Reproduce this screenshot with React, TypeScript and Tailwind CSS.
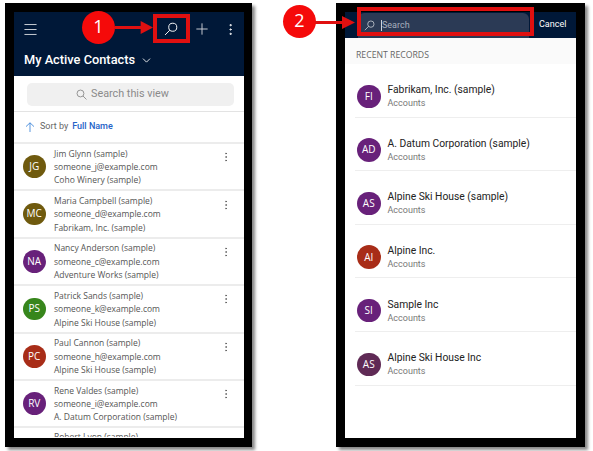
import { ChevronDown, Menu, MoreVertical, Plus } from "lucide-react";

const CONTACTS = [
  { initials: "JG", color: "bg-[#6f5a0e]", name: "Jim Glynn (sample)", email: "someone_j@example.com", company: "Coho Winery (sample)" },
  { initials: "MC", color: "bg-[#6f5a0e]", name: "Maria Campbell (sample)", email: "someone_d@example.com", company: "Fabrikam, Inc. (sample)" },
  { initials: "NA", color: "bg-[#68217a]", name: "Nancy Anderson (sample)", email: "someone_c@example.com", company: "Adventure Works (sample)" },
  { initials: "PS", color: "bg-[#37861c]", name: "Patrick Sands (sample)", email: "someone_k@example.com", company: "Alpine Ski House (sample)" },
  { initials: "PC", color: "bg-[#a82d18]", name: "Paul Cannon (sample)", email: "someone_h@example.com", company: "Alpine Ski House (sample)" },
  { initials: "RV", color: "bg-[#68217a]", name: "Rene Valdes (sample)", email: "someone_i@example.com", company: "A. Datum Corporation (sample)" },
];

const RECORDS = [
  { initials: "FI", color: "bg-[#68217a]", name: "Fabrikam, Inc. (sample)" },
  { initials: "AD", color: "bg-[#68217a]", name: "A. Datum Corporation (sample)" },
  { initials: "AS", color: "bg-[#68217a]", name: "Alpine Ski House (sample)" },
  { initials: "AI", color: "bg-[#a82d18]", name: "Alpine Inc." },
  { initials: "SI", color: "bg-[#68217a]", name: "Sample Inc" },
  { initials: "AS", color: "bg-[#5f2a55]", name: "Alpine Ski House Inc" },
];

function SearchGlyph({ className }: { className: string }) {
  return (
    <svg className={className} viewBox="0 0 16 16" fill="none" stroke="currentColor" strokeWidth={1.1}>
      <circle cx="10" cy="6" r="4.6" />
      <path d="M6.6 9.4 1.2 14.8" />
    </svg>
  );
}

function Callout({ label, className }: { label: string; className: string }) {
  return (
    <div className={`absolute flex h-[33px] w-[33px] items-center justify-center rounded-full bg-[#f50a0a] pb-[2px] text-[18px] font-medium text-white ${className}`}>
      {label}
    </div>
  );
}

function Arrow({ className }: { className: string }) {
  return (
    <svg className={`absolute h-[13px] text-[#e01010] ${className}`} viewBox="0 0 40 14" preserveAspectRatio="none" fill="currentColor">
      <path d="M0 5.4h27V0l13 7-13 7V8.6H0z" />
    </svg>
  );
}

export default function App() {
  return (
    <div className="relative h-[451px] w-[593px] overflow-hidden bg-white font-['Open_Sans',sans-serif]">
      <div className="flex items-start gap-[84px] pl-[5px] pt-[3px]">
        {/* Lista de contactos */}
        <div className="box-border h-[444px] w-[247px] border-[9px] border-r-[8px] border-black bg-white shadow-[3px_3px_3px_#888]">
          <div className="h-[64px] bg-[#001838] text-white">
            <div className="flex h-[34px] items-center pl-[8px]">
              <Menu className="h-[17px] w-[17px]" strokeWidth={1.1} />
              <SearchGlyph className="ml-[125px] h-[14px] w-[14px]" />
              <Plus className="ml-[15px] h-[18px] w-[18px] text-[#c8ccd4]" strokeWidth={1.3} />
              <MoreVertical className="ml-[12px] h-[15px] w-[15px]" strokeWidth={1.5} />
            </div>
            <div className="flex items-center gap-[5px] pl-[10px] pt-[4px]">
              <span className="font-['Roboto',sans-serif] text-[12.8px] font-medium leading-[20px]">My Active Contacts</span>
              <ChevronDown className="h-[13px] w-[13px]" strokeWidth={1.6} />
            </div>
          </div>
          <div className="box-border h-[36px] border-b border-[#e3e3e3] pl-[13px] pr-[10px] pt-[7px]">
            <div className="flex h-[23px] items-center gap-[4px] rounded-[5px] bg-[#f0f0f0] pl-[49px] font-['Roboto',sans-serif] text-[10.8px] text-[#8a8a8a]">
              <svg className="h-[11px] w-[11px]" viewBox="0 0 16 16" fill="none" stroke="currentColor" strokeWidth={1.3}>
                <circle cx="6.5" cy="6.5" r="5" />
                <path d="m10.2 10.2 5 5" />
              </svg>
              Search this view
            </div>
          </div>
          <div className="box-border flex h-[32px] items-center gap-[4px] border-b-2 border-[#ececec] pl-[11px] font-['Roboto',sans-serif] text-[9px] text-[#666]">
            <svg className="h-[10px] w-[10px] text-[#2f7cd6]" viewBox="0 0 10 10" fill="none" stroke="currentColor" strokeWidth={0.8}>
              <path d="M5 10V.8M1 4.6 5 .8l4 3.8" />
            </svg>
            <span className="ml-[1px]">Sort by</span>
            <span className="font-medium text-[#2463c7]">Full Name</span>
          </div>
          {CONTACTS.map((c) => (
            <div key={c.email} className="box-border flex h-[47.4px] items-center border-b-2 border-[#ececec] text-[8.5px] leading-[13.4px] text-[#555]">
              <div className={`ml-[9px] flex h-[22.5px] w-[22.5px] shrink-0 items-center justify-center rounded-full text-[10px] text-white ${c.color}`}>
                {c.initials}
              </div>
              <div className="ml-[8.5px] flex-1 whitespace-nowrap">
                <div>{c.name}</div>
                <div>{c.email}</div>
                <div>{c.company}</div>
              </div>
              <MoreVertical className="mb-[19px] mr-[12px] h-[12px] w-[12px] text-[#555]" strokeWidth={1.4} />
            </div>
          ))}
          <div className="h-[8.6px] overflow-hidden pl-[40px] pt-[2px] text-[8.5px] leading-[13px] text-[#555]">Robert Lyon (sample)</div>
        </div>

        {/* Busqueda */}
        <div className="box-border h-[444px] w-[249px] border-[9px] border-black bg-white shadow-[3px_3px_3px_#888]">
          <div className="flex h-[26px] items-end bg-[#001838] pl-[13px] text-white">
            <div className="flex h-[25px] w-[171px] items-center rounded-t-[6px] bg-[#2b3a55] pl-[6px] font-['Roboto',sans-serif] text-[9px] text-[#a8b0be]">
              <SearchGlyph className="h-[11px] w-[11px] text-[#d0d4da]" />
              <span className="ml-[6px] border-l border-[#d0d4da] leading-[11px]">Search</span>
            </div>
            <span className="mb-[7px] ml-[10px] font-['Roboto',sans-serif] text-[9px]">Cancel</span>
          </div>
          <div className="flex h-[26px] items-center bg-[#fafafa] pl-[11px] pt-[10px] text-[8.7px] text-[#666]">RECENT RECORDS</div>
          {RECORDS.map((r, i) => (
            <div key={i} className="ml-[10px] box-border flex h-[53.6px] items-center border-b border-[#eeeeee] pl-[2px] pt-[12px]">
              <div className={`flex h-[23.5px] w-[23.5px] shrink-0 items-center justify-center rounded-full text-[10px] text-white ${r.color}`}>
                {r.initials}
              </div>
              <div className="ml-[7px] font-['Roboto',sans-serif]">
                <div className="text-[10.3px] leading-[14px] text-[#222]">{r.name}</div>
                <div className="text-[9px] leading-[12px] text-[#777]">Accounts</div>
              </div>
            </div>
          ))}
        </div>
      </div>

      {/* Llamadas */}
      <Callout label="1" className="left-[82px] top-[11px]" />
      <Arrow className="left-[115px] top-[21px] w-[38px]" />
      <div className="absolute left-[153px] top-[14px] h-[29px] w-[37px] border-[4px] border-[#e01010]" />
      <Callout label="2" className="left-[283px] top-[5px]" />
      <Arrow className="left-[315px] top-[16px] w-[40px]" />
      <div className="absolute left-[357px] top-[7px] h-[29px] w-[177px] border-[4px] border-[#e01010]" />
    </div>
  );
}
